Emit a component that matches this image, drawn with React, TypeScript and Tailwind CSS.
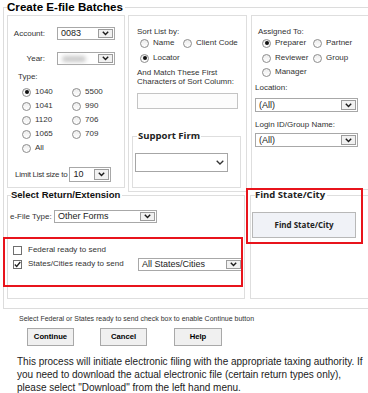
import React from "react";

const Chevron = () => (
  <svg width="7" height="5" viewBox="0 0 7 5" fill="none">
    <path d="M0.8 0.8 L3.5 3.6 L6.2 0.8" stroke="#1a1a1a" strokeWidth="1.4" />
  </svg>
);

function ClassicSelect({
  value,
  className = "",
  blurred = false,
}: {
  value?: string;
  className?: string;
  blurred?: boolean;
}) {
  return (
    <div className={`flex border border-[#a8a8a8] bg-white p-[1px] text-[9px] text-[#222] ${className}`}>
      <span className="flex-1 flex items-center pl-[2px] leading-none">
        {blurred ? <span className="block w-[24px] h-[6px] ml-[1px] rounded-sm bg-[#c9c9c9] blur-[2px]" /> : value}
      </span>
      <span className="w-[15px] flex items-center justify-center border border-[#9c9c9c] bg-[#f1f1f1]">
        <Chevron />
      </span>
    </div>
  );
}

function Radio({ checked = false, label, className = "" }: { checked?: boolean; label: string; className?: string }) {
  return (
    <span className={`flex items-center ${className}`}>
      <span className="w-[9px] h-[9px] shrink-0 rounded-full border border-[#8d8d8d] bg-gradient-to-b from-[#ececec] to-white flex items-center justify-center">
        {checked && <span className="w-[4px] h-[4px] rounded-full bg-[#111]" />}
      </span>
      <span className="ml-[4px]">{label}</span>
    </span>
  );
}

function Checkbox({ checked = false }: { checked?: boolean }) {
  return (
    <span className="w-[9px] h-[9px] shrink-0 border border-[#6f6f6f] bg-white flex items-center justify-center">
      {checked && (
        <svg width="7" height="7" viewBox="0 0 7 7" fill="none">
          <path d="M0.8 3.5 L2.7 5.5 L6.3 1" stroke="#222" strokeWidth="1.3" />
        </svg>
      )}
    </span>
  );
}

export default function App() {
  return (
    <div className="relative w-[368px] h-[393px] overflow-hidden bg-white text-[#333] font-['Liberation_Sans',Arial,sans-serif]">
      <fieldset className="ml-[3px] w-[372px] border border-[#dcdcdc] pl-[3px] pb-[9px]">
        <legend className="text-[11.6px] leading-[14px] font-bold text-black pr-[2px]">Create E-file Batches</legend>

        {/* top row */}
        <div className="flex items-start mt-[1px]">
          {/* left panel */}
          <div className="w-[118px] h-[173px] shrink-0 border border-[#dedede] text-[8px] leading-[10px]">
            <div className="flex items-center h-[13px] mt-[11px]">
              <span className="w-[37px] text-right">Account:</span>
              <ClassicSelect value="0083" className="ml-[12px] w-[58px] h-[13px]" />
            </div>
            <div className="flex items-center h-[13px] mt-[12px]">
              <span className="w-[37px] text-right">Year:</span>
              <ClassicSelect blurred className="ml-[12px] w-[58px] h-[13px]" />
            </div>
            <div className="mt-[7px] ml-[10px]">Type:</div>
            <div className="grid grid-cols-[50px_50px] auto-rows-[14px] items-center mt-[3px] ml-[14px]">
              <Radio checked label="1040" />
              <Radio label="5500" />
              <Radio label="1041" />
              <Radio label="990" />
              <Radio label="1120" />
              <Radio label="706" />
              <Radio label="1065" />
              <Radio label="709" />
              <Radio label="All" />
            </div>
            <div className="flex items-center h-[15px] mt-[12px] ml-[7px]">
              <span className="tracking-[-0.25px]">Limit List size to</span>
              <ClassicSelect value="10" className="ml-[2px] w-[42px] h-[15px]" />
            </div>
          </div>

          {/* middle panel */}
          <div className="ml-[3px] w-[119px] h-[177px] shrink-0 border border-[#dedede] text-[8px] leading-[10px]">
            <div className="mt-[11px] ml-[8px]">Sort List by:</div>
            <div className="flex items-center h-[12px] ml-[11px]">
              <Radio label="Name" className="w-[43px]" />
              <Radio label="Client Code" />
            </div>
            <div className="flex items-center h-[12px] mt-[3px] ml-[11px]">
              <Radio checked label="Locator" />
            </div>
            <div className="mt-[4px] ml-[8px] leading-[9px]">
              And Match These First
              <br />
              Characters of Sort Column:
            </div>
            <div className="mt-[7px] ml-[8px] w-[101px] h-[16px] border border-[#c4c4c4] bg-[#fcfcfc]" />
            <fieldset className="mt-[21px] ml-[3px] w-[109px] border border-[#dedede] pl-[2px] pb-[15px]">
              <legend className="ml-[2px] px-[1px] text-[9.5px] leading-[12px] font-bold text-[#222] font-['Open_Sans',sans-serif]">
                Support Firm
              </legend>
              <div className="mt-[11px] w-[93px] h-[19px] border border-[#a6a6a6] bg-white flex items-center justify-end pr-[3px]">
                <svg width="8" height="5" viewBox="0 0 8 5" fill="none">
                  <path d="M0.7 0.7 L4 4 L7.3 0.7" stroke="#333" strokeWidth="1.3" />
                </svg>
              </div>
            </fieldset>
          </div>

          {/* right panel */}
          <div className="ml-[4px] w-[121px] h-[175px] shrink-0 border border-[#dedede] text-[8px] leading-[10px]">
            <div className="mt-[11px] ml-[6px]">Assigned To:</div>
            <div className="flex items-center h-[12px] ml-[10px]">
              <Radio checked label="Preparer" className="w-[51px]" />
              <Radio label="Partner" />
            </div>
            <div className="flex items-center h-[12px] mt-[3px] ml-[10px]">
              <Radio label="Reviewer" className="w-[51px]" />
              <Radio label="Group" />
            </div>
            <div className="flex items-center h-[12px] mt-[2px] ml-[10px]">
              <Radio label="Manager" />
            </div>
            <div className="mt-[5px] ml-[3px]">Location:</div>
            <ClassicSelect value="(All)" className="mt-[5px] ml-[3px] w-[103px] h-[14px]" />
            <div className="mt-[8px] ml-[3px]">Login ID/Group Name:</div>
            <ClassicSelect value="(All)" className="mt-[3px] ml-[3px] w-[103px] h-[14px]" />
          </div>
        </div>

        {/* lower row */}
        <div className="flex items-start -mt-[3px]">
          <fieldset className="w-[238px] shrink-0 border border-[#dedede] pl-[3px] pb-[27px] text-[8px] leading-[10px]">
            <legend className="text-[9.5px] leading-[12px] font-bold text-[#111] pr-[2px]">Select Return/Extension</legend>
            <div className="flex items-center h-[13px] mt-[9px] -ml-[1px]">
              <span className="w-[44px]">e-File Type:</span>
              <ClassicSelect value="Other Forms" className="w-[103px] h-[13px]" />
            </div>
            <div className="flex items-center h-[12px] mt-[21px] ml-[2px]">
              <Checkbox />
              <span className="ml-[6px]">Federal ready to send</span>
            </div>
            <div className="flex items-center h-[14px] mt-[1px] ml-[2px]">
              <Checkbox checked />
              <span className="ml-[6px] w-[110px]">States/Cities ready to send</span>
              <ClassicSelect value="All States/Cities" className="w-[105px] h-[13px]" />
            </div>
          </fieldset>

          <fieldset className="ml-[5px] w-[122px] shrink-0 border border-[#dedede] pl-[1px] pb-[60px]">
            <legend className="ml-[3px] pr-[2px] text-[9.5px] leading-[12px] font-bold text-[#222] font-['Open_Sans',sans-serif]">
              Find State/City
            </legend>
            <button className="mt-[11px] w-[104px] h-[26px] border border-[#b8b8b8] bg-[#f0f2f7] text-[8px] font-bold text-[#222] font-['Open_Sans',sans-serif]">
              Find State/City
            </button>
          </fieldset>
        </div>
      </fieldset>

      <div className="mt-[5px] ml-[19px] text-[7px] leading-[9px] text-[#333] whitespace-nowrap">
        Select Federal or States ready to send check box to enable Continue button
      </div>

      <div className="flex mt-[5px] ml-[27px] text-[7.7px] font-bold text-black">
        <button className="w-[47px] h-[18px] border border-[#a9a9a9] bg-[#f0f0f0]">Continue</button>
        <button className="ml-[26px] w-[47px] h-[18px] border border-[#a9a9a9] bg-[#f0f0f0]">Cancel</button>
        <button className="ml-[27px] w-[48px] h-[18px] border border-[#a9a9a9] bg-[#f0f0f0]">Help</button>
      </div>

      <p className="mt-[9px] ml-[17px] text-[10px] leading-[13px] text-[#222] whitespace-nowrap">
        This process will initiate electronic filing with the appropriate taxing authority. If
        <br />
        you need to download the actual electronic file (certain return types only),
        <br />
        please select "Download" from the left hand menu.
      </p>

      {/* red highlight annotations */}
      <div className="absolute left-[246px] top-[188px] w-[117px] h-[56px] border-2 border-[#e8141c] pointer-events-none" />
      <div className="absolute left-[3px] top-[237px] w-[240px] h-[50px] border-2 border-[#e8141c] pointer-events-none" />
    </div>
  );
}
